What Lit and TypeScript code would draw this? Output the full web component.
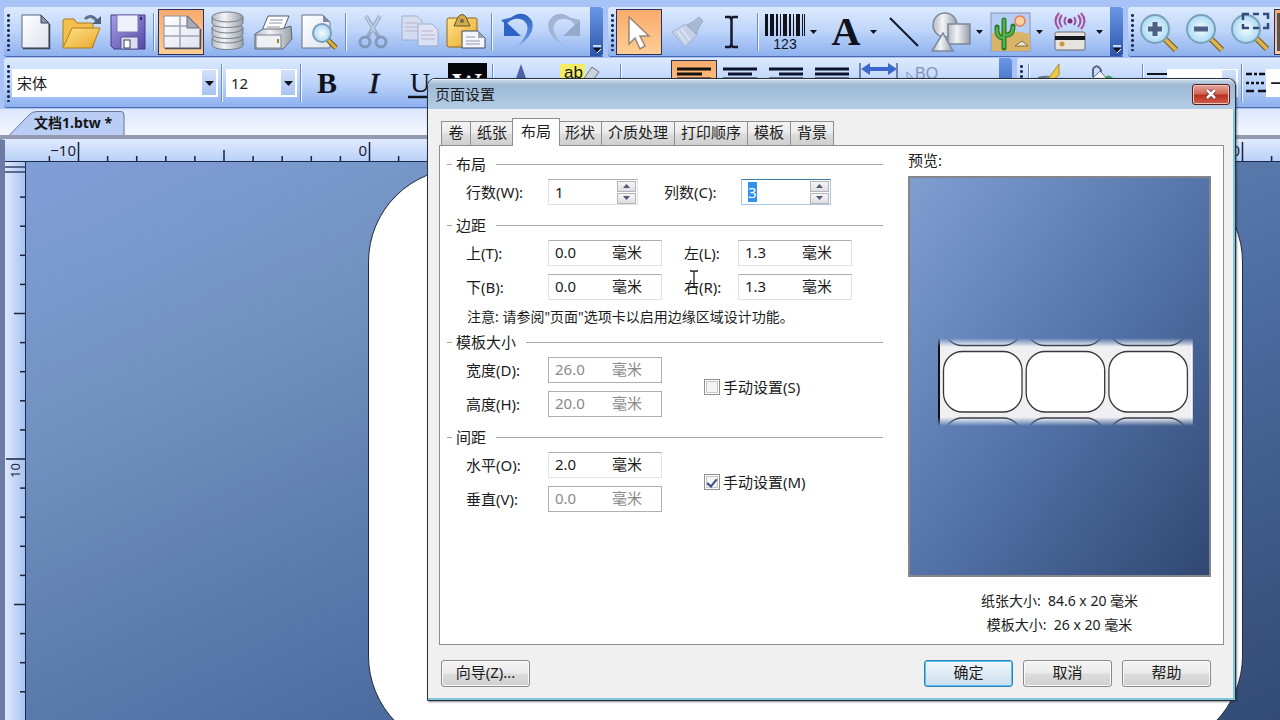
import { LitElement, html, svg, css, nothing } from "lit";
import { customElement, query } from "lit/decorators.js";
import { classMap } from "lit/directives/class-map.js";

const ICONS: Record<string, unknown> = {
  blank: svg`<path d="M10 6h19l8 8v25H10z" fill="url(#paper)" stroke="#5d6474"/><path d="M29 6v8h8z" fill="#8b95ad" stroke="#3d4456"/><path d="M11 39.500h26.500V15" fill="none" stroke="#3d4456" stroke-width="1.500"/>`,
  open: svg`<path d="M5 38V12q0-2 2-2h9l3 4h14q2 0 2 2v22z" fill="#f3c04b" stroke="#a97a1c"/><path d="M5 39l9-20h28l-8 20z" fill="url(#gold)" stroke="#b17c12"/><path d="M27 10q6-6 12 2" fill="none" stroke="#60718f" stroke-width="3"/><path d="M43 7v8h-9z" fill="#4f6080"/>`,
  save: svg`<path d="M7 6h34v34H10l-3-3z" fill="url(#violet)" stroke="#453a8c"/><rect x="13" y="6" width="21" height="17" rx="1" fill="#eef0fb" stroke="#7d78b8"/><path d="M17 28h17v12H17z" fill="#dcdff0" stroke="#5c54a0"/><rect x="20" y="31" width="6" height="8" fill="#fff" stroke="#3c3c58"/><rect x="36" y="8" width="2" height="3" fill="#2e2671"/>`,
  grid: svg`<path d="M6 7h24l12 12v20H6z" fill="url(#paper)" stroke="#8a8f9d"/><path d="M6 17h26M6 27h36M22 7v32" stroke="#a1a5b2" stroke-width="1.500"/><path d="M29 7v12h12z" fill="#a7adb8" stroke="#6b6f7c"/><path d="M7 39.500h35.500V20" fill="none" stroke="#4c4f5c" stroke-width="1.500"/>`,
  database: svg`<g fill="url(#steel)" stroke="#747b85"><path d="M8 30v6c0 6 31 6 31 0v-6z"/><ellipse cx="23.500" cy="29" rx="15.500" ry="5"/><path d="M8 19v6c0 6 31 6 31 0v-6z"/><ellipse cx="23.500" cy="19" rx="15.500" ry="5"/><path d="M8 8v6c0 6 31 6 31 0V8z"/><ellipse cx="23.500" cy="8" rx="15.500" ry="5"/></g>`,
  printer: svg`<path d="M18 7h21l-7 17H11z" fill="#fff" stroke="#555c6c"/><path d="M20 11h13M19 14h13M17 18h13" stroke="#8c93a4"/><path d="M5 25l8-5h18l10-3 1 13-9 10H5z" fill="url(#steel)" stroke="#5d6474"/><path d="M6 26h25v13H6z" fill="#eef0f4" stroke="#7b8292"/><rect x="27" y="30" width="2" height="4" fill="#8a8a24"/>`,
  preview: svg`<path d="M6 6h21l7 7v26H6z" fill="url(#paper)" stroke="#6a7184"/><path d="M27 6v7h7z" fill="#7d88a3"/><path d="M32 31l8 8" stroke="#6c5a18" stroke-width="5"/><path d="M32 31l8 8" stroke="#d9b23a" stroke-width="3"/><circle cx="26" cy="24" r="9" fill="url(#lens)" stroke="#7d9cba" stroke-width="2"/>`,
  cut: svg`<g opacity=".75"><path d="M16 7l13 22M30 7L17 29" stroke="#8d9cba" stroke-width="4"/><path d="M16 7l9 16M30 7l-9 16" stroke="#c6d2e8" stroke-width="1.500"/><circle cx="15" cy="33" r="5" fill="none" stroke="#7988a9" stroke-width="3"/><circle cx="31" cy="33" r="5" fill="none" stroke="#7988a9" stroke-width="3"/></g>`,
  copy: svg`<g opacity=".8"><path d="M6 7h15l5 5v19H6z" fill="#d9deee" stroke="#9aa5c4"/><path d="M9 14h13M9 18h13M9 22h13" stroke="#c6a9bd"/><path d="M22 15h14l6 6v16H22z" fill="#e4e8f4" stroke="#98a2bd"/><path d="M25 22h12M25 26h14M25 30h14" stroke="#c6a9bd"/></g>`,
  paste: svg`<rect x="5" y="9" width="30" height="29" rx="2" fill="url(#gold)" stroke="#8f6a12"/><path d="M12 17l4-9q4-5 8 0l4 9z" fill="#cfab4c" stroke="#6c5620"/><circle cx="20" cy="12" r="2" fill="#6f6a4a"/><path d="M20 22h16l7 7v10H20z" fill="#f3f5fa" stroke="#434a5e"/><path d="M24 28h9M24 32h14M24 35h14" stroke="#9199ac"/><path d="M36 22v7h7z" fill="#9aa3b6"/>`,
  undo: svg`<path d="M9 11l5 5q7-9 17-5 11 8-5 26 18-12 14-25-8-13-22-3l-1 0z" fill="url(#undoBlue)" transform="translate(-4 0)"/><path d="M8 11v16h17z" fill="#2c63c4"/>`,
  redo: svg`<path d="M9 11l5 5q7-9 17-5 11 8-5 26 18-12 14-25-8-13-22-3l-1 0z" fill="#a3b3d1" transform="translate(47 0) scale(-1 1)"/><path d="M38 11v16H21z" fill="#97a8ca"/>`,
  pointer: svg`<path d="M13 8v27l6-6 5 11 5-3-5-10h9z" fill="#fff" stroke="#97877a" stroke-width="1.500"/>`,
  brush: svg`<g opacity=".85"><path d="M10 23l13-8 13 10-13 13z" fill="#c5d0e4" stroke="#9dabc8"/><path d="M25 16l6-3 6-5 4 4-4 6-3 7z" fill="#a7b3cd" stroke="#8e9cba"/><path d="M15 22l9 12M19 19l9 12" stroke="#e2e8f3" stroke-width="2"/></g>`,
  ibeam: svg`<path d="M17 8h5l1 2 2-2h5M17 38h5l1-2 2 2h5M23.500 9v28" fill="none" stroke="#151a2b" stroke-width="2.500"/>`,
  barcode: svg`<path d="M3 5h3v22H3zM8 5h4v22H8zM14 5h2v22h-2zM18 5h1v22h-1zM21 5h4v22h-4zM27 5h2v22h-2zM31 5h1v22h-1zM34 5h4v22h-4zM40 5h1v22h-1zM42 5h1v22h-1z" fill="#10131c"/><text x="23" y="40" text-anchor="middle" class="sans" font-size="14">123</text>`,
  letter: svg`<text x="24" y="36" text-anchor="middle" class="serif" font-size="40">A</text>`,
  line: svg`<path d="M8 9l28 28" stroke="#10162a" stroke-width="2"/>`,
  shapes: svg`<g fill="url(#steel)" stroke="#7d879b" stroke-width="1.500"><circle cx="17" cy="16" r="12"/><path d="M20 15h22v20H20z"/><path d="M15 24l10 18H4z"/></g>`,
  picture: svg`<rect x="3" y="4" width="39" height="38" fill="#b6cdf6" stroke="#8694b4"/><path d="M4 24q18-4 38 1v17H4z" fill="#d8b468"/><circle cx="32" cy="12" r="5" fill="#ffd0a0" stroke="#e97b4e" stroke-width="1.500"/><path d="M16 39V11M16 29q-8 0-7-11M17 26q8 1 8-9" fill="none" stroke="#247a2b" stroke-width="5" stroke-linecap="round"/><path d="M16 38V11M16 29q-8 0-7-10M17 26q8 1 8-8" fill="none" stroke="#55b24b" stroke-width="2.500" stroke-linecap="round"/><path d="M27 37l7-5 6 5z" fill="#f2e8d6" stroke="#7a6a48"/>`,
  rfid: svg`<g fill="none" stroke="#a0509f" stroke-width="2"><path d="M18 8q-3 4 0 8M26 8q3 4 0 8M14 6q-5 6 0 12M30 6q5 6 0 12M11 4q-7 8 0 16M33 4q7 8 0 16"/></g><circle cx="22" cy="12" r="2.500" fill="#7c2d7c"/><rect x="7" y="23" width="30" height="18" rx="2" fill="#e6e3de" stroke="#6b6b70"/><path d="M7 27h30v4H7z" fill="#15171f"/><circle cx="14" cy="35" r="2.500" fill="#c8963c"/>`,
  zoomIn: svg`<path d="M28 29l12 12" stroke="#7f651c" stroke-width="6"/><path d="M28 29l12 12" stroke="#dcb552" stroke-width="3.500"/><circle cx="19" cy="20" r="14" fill="url(#lens)" stroke="#7ba0bd" stroke-width="2"/><path d="M19 13v14M12 20h14" stroke="#4e6184" stroke-width="5"/>`,
  zoomOut: svg`<path d="M28 29l12 12" stroke="#7f651c" stroke-width="6"/><path d="M28 29l12 12" stroke="#dcb552" stroke-width="3.500"/><circle cx="19" cy="20" r="14" fill="url(#lens)" stroke="#7ba0bd" stroke-width="2"/><path d="M12 20h14" stroke="#4e6184" stroke-width="5"/>`,
  zoomArea: svg`<path d="M28 29l11 11" stroke="#7f651c" stroke-width="6"/><path d="M28 29l11 11" stroke="#dcb552" stroke-width="3.500"/><circle cx="18" cy="20" r="14" fill="url(#lens)" stroke="#7ba0bd" stroke-width="2"/><path d="M15 11V5h6M25 5h6M35 5h5v5M40 14v5h-5M31 19h-6M21 19h-6v-4" fill="none" stroke="#34497a" stroke-width="2.500"/>`,
  page: svg`<rect x="3" y="4" width="36" height="38" fill="#53565f"/>`,
  bold: svg`<text x="22" y="33" text-anchor="middle" class="serif" font-size="30">B</text>`,
  italic: svg`<text x="23" y="33" text-anchor="middle" class="serif regular" font-size="30" font-style="italic" stroke="#10131c" stroke-width=".6">I</text>`,
  underline: svg`<text x="23" y="32" text-anchor="middle" class="serif regular" font-size="28">U</text><path d="M11 37h24" stroke="#10131c" stroke-width="2.500"/>`,
  inverse: svg`<path d="M5 3h39v38H5z" fill="#05060a"/><text x="24" y="33" text-anchor="middle" class="serif light" font-size="30">W</text>`,
  fontColor: svg`<path d="M17 24L24 4l7 20z" fill="#4a63a8"/>`,
  marker: svg`<path d="M3 4h25v14H3z" fill="#f4ec62"/><text x="7" y="18" class="sans" font-size="17">ab</text><path d="M26 20l9-13 7 5-9 12z" fill="#cbd1df" stroke="#68728a"/>`,
  left: svg`<path d="M6 9h34M6 14h25M6 19h34" stroke="#16130f" stroke-width="3"/>`,
  center: svg`<path d="M6 9h34M11 14h24M6 19h34" stroke="#0e1430" stroke-width="3"/>`,
  right: svg`<path d="M6 9h34M16 14h24M6 19h34" stroke="#0e1430" stroke-width="3"/>`,
  justify: svg`<path d="M6 9h34M6 14h34M6 19h34" stroke="#0e1430" stroke-width="3"/>`,
  fit: svg`<path d="M5 3v18M42 3v18" stroke="#566792" stroke-width="1.500"/><path d="M6 9l9-6v4h18V3l9 6-9 6v-4H15v4z" fill="#3b68cf"/>`,
  arc: svg`<text x="14" y="19" class="sans faint" font-size="16">BO</text><path d="M6 12l6 6H6z" fill="none" stroke="#8193be"/>`,
  pencil: svg`<path d="M5 18q8-2 12-1" fill="none" stroke="#68728a" stroke-width="2"/><path d="M15 19L26 4v11l-6 5z" fill="#edca45" stroke="#aa8a28"/>`,
  bucket: svg`<path d="M14 17V9q4-6 8 1v4" fill="none" stroke="#5b6785" stroke-width="2"/><path d="M12 20l9-9 8 9z" fill="#f1f3f8" stroke="#68728a"/><path d="M25 20q3-8 9-2v2z" fill="#3da553"/>`,
};

const DEFS = svg`<defs>
  <linearGradient id="paper" x1="0" y1="0" x2="1" y2="1"><stop offset="0" stop-color="#fff"/><stop offset="1" stop-color="#dfe3ef"/></linearGradient>
  <linearGradient id="gold" x1="0" y1="0" x2="1" y2="1"><stop offset="0" stop-color="#ffe48d"/><stop offset="1" stop-color="#e9a62a"/></linearGradient>
  <linearGradient id="violet" x1="0" y1="0" x2="1" y2="1"><stop offset="0" stop-color="#a49fe4"/><stop offset="1" stop-color="#5548a6"/></linearGradient>
  <linearGradient id="steel" x1="0" y1="0" x2="1" y2="0"><stop offset="0" stop-color="#b4bac2"/><stop offset=".4" stop-color="#f2f4f6"/><stop offset="1" stop-color="#989fa9"/></linearGradient>
  <radialGradient id="lens"><stop offset="0" stop-color="#f5fcff"/><stop offset="1" stop-color="#a9daf2"/></radialGradient>
  <linearGradient id="undoBlue" x1="0" y1="0" x2="0" y2="1"><stop offset="0" stop-color="#2b62c0"/><stop offset="1" stop-color="#6f9ce8"/></linearGradient>
</defs>`;

type Tool = { icon: string; title: string; on?: boolean; menu?: boolean };
const t = (icon: string, title: string, extra: Partial<Tool> = {}): Tool => ({ icon, title, ...extra });

@customElement("tool-button")
class ToolButton extends LitElement {
  static properties = { icon: {}, name: {}, on: { type: Boolean }, menu: { type: Boolean } };
  declare icon: string;
  declare name: string;
  declare on: boolean;
  declare menu: boolean;
  static styles = css`
    :host { display: block; flex: none; }
    .tool { display: flex; align-items: center; width: 46px; height: 46px; padding: 0; border: 0; background: none; overflow: hidden; }
    .tool.menu { width: 60px; }
    .tool.on { background: linear-gradient(#f8ab6c, #ffce94); box-shadow: inset 0 0 0 1px #2c2f62; }
    .glyph { flex: none; width: 46px; height: 46px; }
    .arrow { flex: none; width: 7px; height: 4px; margin-left: 2px; }
    .sans { font-family: "Liberation Sans", sans-serif; fill: #10131c; }
    .serif { font-family: "Liberation Serif", serif; font-weight: 700; fill: #10131c; }
    .regular { font-weight: 400; }
    .light { fill: #fff; }
    .faint { fill: #8193be; }
  `;
  render() {
    return html`<button class=${classMap({ tool: true, on: this.on, menu: this.menu })} aria-label=${this.name}>
      <svg class="glyph" viewBox="0 0 46 46">${DEFS}${ICONS[this.icon]}</svg>
      ${this.menu ? html`<svg class="arrow" viewBox="0 0 7 4"><path d="M0 0h7L3.500 4z" fill="#10131c"/></svg>` : nothing}
    </button>`;
  }
}

@customElement("page-setup")
class PageSetup extends LitElement {
  @query("#cols") cols!: HTMLInputElement;
  static styles = css`
    :host { display: block; box-sizing: border-box; color: #1c1c1c; font: 15px/20px "Noto Sans", "Noto Sans CJK SC", sans-serif;
      background: #f0f0f0; border: 1px solid #27303d; border-radius: 8px 8px 1px 1px; overflow: hidden;
      box-shadow: inset -2px -2px 0 #7fc8da, 1px 1px 2px #2238; padding: 0 11px 13px; }
    button, input { font: inherit; color: inherit; }
    .title { display: flex; align-items: center; justify-content: space-between; height: 30px; margin: 0 -11px; padding: 0 5px 0 7px;
      background: linear-gradient(#d3dfea, #9db9d5 20%, #b4cde6); box-shadow: inset 0 1px 0 #e9f1f8; }
    .title h1 { margin: 0; font-size: 15px; font-weight: 400; }
    .close { width: 38px; height: 21px; padding: 0; border: 1px solid #5b1f22; border-radius: 3px; background: linear-gradient(#e3a79c, #cf6555 48%, #b9301f 52%, #cf5f4c);
      box-shadow: inset 0 0 0 1px #f0c3bb; display: grid; place-items: center; }
    .close svg { width: 12px; height: 10px; }
    .tabs { display: flex; align-items: flex-end; height: 27px; padding: 9px 3px 0; }
    .tab { height: 24px; padding: 0 0 3px; margin: 0 0 0 -1px; flex: none; border: 1px solid #8c8e92; border-bottom: 0; background: linear-gradient(#f3f3f3, #ebebeb 48%, #dddddd 52%, #cfcfcf); }
    .t1 { width: 30px; } .t2 { width: 44px; } .t4 { width: 74px; }
    .tab.active { width: 48px; height: 28px; margin: 0 -1px -1px -2px; padding-bottom: 3px; background: #fff; position: relative; z-index: 1; }
    .panel { display: grid; grid-template-columns: minmax(0, 1fr) 303px; column-gap: 25px; background: #fff; border: 1px solid #8c8e92; min-height: 498px; padding: 0 12px 0 7px; }
    form { padding-top: 8px; min-width: 0; }
    fieldset { border: 0; margin: 0 0 10px; padding: 0; min-width: 0; }
    fieldset.tight { margin-bottom: 5px; }
    .head { display: flex; align-items: center; gap: 4px; height: 20px; margin-bottom: 5px; }
    .head::before, .head::after { content: ""; height: 1px; background: #a9a9a9; }
    .head::before { width: 5px; }
    .head::after { flex: 1; margin-left: 6px; }
    .rows { display: grid; grid-template-columns: 82px 114px auto 1fr; row-gap: 8px; align-items: center; padding-left: 19px; }
    .rows > label:not(.check) { grid-column: 1; }
    .rows > .field { grid-column: 2; }
    .side { grid-column: 3; display: grid; grid-template-columns: 54px 114px; align-items: center; margin-left: 22px; }
    .side.wide { grid-template-columns: 77px 90px; margin-left: 2px; }
    .field { display: flex; align-items: center; box-sizing: border-box; height: 26px; border: 1px solid #e0e3ea; border-top-color: #abadb3; background: #fff; padding: 0 0 2px 6px; }
    .field span { white-space: nowrap; }
    .field input { width: 57px; flex: none; padding: 0; border: 0; outline: 0; background: none; height: 20px; line-height: 20px; }
    .field.off { border: 1px solid #afafaf; color: #8a8a8a; }
    .field.spin { width: 90px; justify-content: space-between; padding: 0 1px 0 6px; }
    .field.focus { border-color: #a8c8e8; border-top-color: #3d7bad; }
    .arrows { display: grid; gap: 1px; }
    .arrows button { width: 19px; height: 11px; padding: 0; display: grid; place-items: center; border: 1px solid #b5b5b9; background: linear-gradient(#f6f6f6, #dedee2); }
    .arrows svg { width: 7px; height: 4px; }
    .field input::selection { background: #3390ee; color: #fff; }
    .note { margin: 7px 0 0 20px; font-size: 14px; white-space: nowrap; }
    .check { display: flex; align-items: center; gap: 3px; grid-row: 1 / span 2; grid-column: 3; margin-left: 42px; }
    .check input { appearance: none; box-sizing: border-box; width: 16px; height: 16px; margin: 0; border: 1px solid #8e8f8f; background: #f4f4f4; box-shadow: inset 0 0 0 1px #fff, inset 0 0 0 2px #c3c7ce; display: grid; place-items: center; }
    .check input:checked::after { content: ""; width: 4px; height: 8px; border: solid #3a4a86; border-width: 0 2px 2px 0; transform: rotate(40deg); }
    .preview { padding-top: 4px; min-width: 0; }
    .preview h2 { margin: 0 0 6px; font-size: 15px; font-weight: 400; }
    .preview svg { display: block; width: 100%; height: auto; }
    .facts { margin: 12px 0 0; font-size: 14px; line-height: 24px; text-align: center; white-space: pre-wrap; }
    .facts p { margin: 0; }
    .actions { display: flex; gap: 10px; margin-top: 15px; padding: 0 13px 0 2px; }
    .push { width: 89px; height: 27px; padding: 0 0 3px; border: 1px solid #8a8a8a; border-radius: 3px; background: linear-gradient(#f4f4f4, #ebebeb 48%, #dcdcdc 52%, #d0d0d0); box-shadow: inset 0 0 0 1px #fafafa; }
    .push.ok { margin-left: auto; border-color: #3c7fb1; background: linear-gradient(#f2f6fa, #dfebf5 50%, #c9def0); box-shadow: inset 0 0 0 1px #4cc8ee; }
  `;
  firstUpdated() {
    this.cols.focus({ preventScroll: true });
    this.cols.select();
  }
  measure(id: string, value: string, off = false) {
    return html`<div class=${classMap({ field: true, off })}><input id=${id} type="text" .value=${value} ?disabled=${off}><span>毫米</span></div>`;
  }
  spinner(id: string, value: string, focus = false) {
    return html`<div class=${classMap({ field: true, spin: true, focus })}><input id=${id} type="text" .value=${value}>
      <span class="arrows"><button type="button" aria-label="增加"><svg viewBox="0 0 7 4"><path d="M0 4h7L3.500 0z" fill="#55597a"/></svg></button>
      <button type="button" aria-label="减少"><svg viewBox="0 0 7 4"><path d="M0 0h7L3.500 4z" fill="#55597a"/></svg></button></span></div>`;
  }
  render() {
    const tabs: [string, string][] = [["卷", "t1"], ["纸张", "t2"], ["布局", "active"], ["形状", "t2"], ["介质处理", "t4"], ["打印顺序", "t4"], ["模板", "t2"], ["背景", "t2"]];
    return html`
      <header class="title"><h1>页面设置</h1>
        <button class="close" aria-label="关闭"><svg viewBox="0 0 12 10"><path d="M2 1l8 8M10 1L2 9" stroke="#6b2a28" stroke-width="4"/><path d="M2 1l8 8M10 1L2 9" stroke="#fff" stroke-width="2.500"/></svg></button>
      </header>
      <div class="tabs" role="tablist">${tabs.map(([n, c]) => html`<button class="tab ${c}" role="tab" aria-selected=${c === "active"}>${n}</button>`)}</div>
      <div class="panel">
        <form>
          <fieldset><div class="head">布局</div>
            <div class="rows"><label for="rows">行数(W):</label>${this.spinner("rows", "1")}
              <div class="side wide"><label for="cols">列数(C):</label>${this.spinner("cols", "3", true)}</div></div>
          </fieldset>
          <fieldset class="tight"><div class="head">边距</div>
            <div class="rows">
              <label for="top">上(T):</label>${this.measure("top", "0.0")}
              <div class="side"><label for="left">左(L):</label>${this.measure("left", "1.3")}</div>
              <label for="bottom">下(B):</label>${this.measure("bottom", "0.0")}
              <div class="side"><label for="right">右(R):</label>${this.measure("right", "1.3")}</div>
            </div>
            <p class="note">注意: 请参阅"页面"选项卡以启用边缘区域设计功能。</p>
          </fieldset>
          <fieldset><div class="head">模板大小</div>
            <div class="rows">
              <label for="w">宽度(D):</label>${this.measure("w", "26.0", true)}
              <label class="check"><input type="checkbox">手动设置(S)</label>
              <label for="h">高度(H):</label>${this.measure("h", "20.0", true)}
            </div>
          </fieldset>
          <fieldset><div class="head">间距</div>
            <div class="rows">
              <label for="hg">水平(O):</label>${this.measure("hg", "2.0")}
              <label class="check"><input type="checkbox" checked>手动设置(M)</label>
              <label for="vg">垂直(V):</label>${this.measure("vg", "0.0", true)}
            </div>
          </fieldset>
        </form>
        <section class="preview"><h2>预览:</h2>
          <svg viewBox="0 0 303 401">
            <defs>
              <linearGradient id="desk" x1="0" y1="0" x2="1" y2="1"><stop offset="0" stop-color="#809ed0"/><stop offset=".5" stop-color="#5474aa"/><stop offset="1" stop-color="#304772"/></linearGradient>
              <linearGradient id="fade" x1="0" y1="0" x2="0" y2="1"><stop offset="0" stop-color="#fff" stop-opacity="0"/><stop offset=".1" stop-color="#fff"/><stop offset=".9" stop-color="#fff"/><stop offset="1" stop-color="#fff" stop-opacity="0"/></linearGradient>
              <mask id="soft"><rect x="28" y="162" width="258" height="88" fill="url(#fade)"/></mask>
            </defs>
            <rect x="1" y="1" width="301" height="399" fill="url(#desk)" stroke="#85868c" stroke-width="2"/>
            <g mask="url(#soft)"><rect x="31" y="160" width="253" height="94" fill="#f0f0f2"/><path d="M31 160v94" stroke="#111" stroke-width="2"/><path d="M284 160v94" stroke="#fff" stroke-width="1.500"/>
              ${[0, 1, 2].map((c) => [0, 1, 2].map((r) => svg`<rect x=${35.5 + c * 82.7} y=${109 + r * 66.500} width="78.500" height="60.500" rx="19" fill="#fff" stroke="#38383c" stroke-width="1.300"/>`))}
            </g>
          </svg>
          <div class="facts"><p>纸张大小:  84.6 x 20 毫米</p><p>模板大小:  26 x 20 毫米</p></div>
        </section>
      </div>
      <footer class="actions"><button class="push">向导(Z)...</button><button class="push ok">确定</button><button class="push">取消</button><button class="push">帮助</button></footer>`;
  }
}

@customElement("app-root")
class AppRoot extends LitElement {
  static styles = css`
    :host { display: flex; flex-direction: column; position: relative; min-height: 100vh; overflow: hidden; box-sizing: border-box; padding-top: 7px; background: #aac3f6; font: 15px/20px "Noto Sans", "Noto Sans CJK SC", sans-serif; color: #1c1c1c; }
    .bar { display: flex; gap: 5px; height: 51px; padding-left: 4px; overflow: hidden; }
    .group { display: flex; align-items: center; flex: none; box-sizing: border-box; height: 50px; background: linear-gradient(#dceafd, #bdd4fa 50%, #8db0ee); border-bottom: 1px solid #4a69b0; border-radius: 3px 0 0 3px; }
    .group.fill { flex: 1; }
    .grip { flex: none; width: 3px; height: 38px; margin: 0 2px 0 3px; background: radial-gradient(circle, #1b2b52 1px, #0000 2px) 0 0 / 3px 5px; }
    .sep { flex: none; width: 1px; height: 38px; margin: 0 3px; background: #6a8ccb; border-right: 1px solid #f2f7ff; }
    .gap { flex: none; width: 46px; }
    .spare { flex: none; width: 50px; }
    .over { flex: none; width: 13px; height: 49px; margin-left: 2px; padding: 0 0 3px; border: 0; border-radius: 0 3px 3px 0; background: linear-gradient(#6a97e6, #2c55a8); display: flex; align-items: flex-end; justify-content: center; }
    .over svg { width: 8px; height: 8px; }
    .combo { display: grid; flex: none; height: 28px; background: #fff; }
    .combo > * { grid-area: 1 / 1; }
    .combo select { appearance: none; width: 100%; height: 28px; border: 0; padding: 0 0 0 5px; background: none; font: inherit; color: inherit; border-radius: 0; }
    .combo .drop { justify-self: end; align-self: center; width: 14px; height: 25px; background: linear-gradient(#d3e2fb, #a9c3f1); pointer-events: none; margin-right: 2px; }
    .font { width: 206px; } .size { width: 71px; } .weight { width: 71px; } .dash { width: 70px; }
    .mini { flex: none; width: 20px; height: 28px; }
    .docs { display: flex; align-items: flex-end; height: 26px; padding-left: 9px; background: linear-gradient(#dce6fc, #f4f7ff); border-bottom: 4px solid #9299b0; }
    .doc { display: grid; width: 116px; height: 24px; padding: 0; border: 0; background: none; color: #151515; font: 700 14px/24px "Noto Sans", "Noto Sans CJK SC", sans-serif; text-align: left; }
    .doc > * { grid-area: 1 / 1; }
    .doc svg { width: 116px; height: 24px; }
    .doc span { padding-left: 25px; }
    .work { display: grid; grid-template: 22px 1fr / 21px 1fr; flex: 1; border-left: 5px solid #6b7ba4; border-top: 1px solid #dce8fc; }
    .h { grid-column: 1 / 3; width: 100%; height: 22px; background: linear-gradient(#dfe9fd, #b9d1f8); border-bottom: 1px solid #1d2a4c; box-sizing: border-box; }
    .v { width: 21px; height: 100%; background: linear-gradient(90deg, #dfe9fd, #a9c4f1); border-right: 1px solid #1d2a4c; box-sizing: border-box; }
    .ruler { overflow: hidden; min-height: 0; }
    .ruler text { font: 15px "Noto Sans", sans-serif; fill: #1b2238; }
    .ruler.v text { font-size: 13px; }
    .canvas { position: relative; overflow: hidden; background: linear-gradient(155deg, #819fd7, #7191c0 25%, #4d6ca0 62%, #324a75); }
    .label { position: absolute; left: 342px; top: 6px; width: 875px; height: 582px; box-sizing: border-box; background: #fff; border: 1px solid #222a3c; border-radius: 94px; }
    .dialog { position: absolute; left: 427px; top: 78px; width: 809px; }
    .cursor { position: absolute; left: 689px; top: 270px; width: 10px; height: 18px; }
  `;
  tools(list: Tool[]) {
    return list.map((x) => html`<tool-button .icon=${x.icon} .name=${x.title} .on=${!!x.on} .menu=${!!x.menu}></tool-button>`);
  }
  combo(cls: string, name: string, value: string) {
    return html`<div class="combo ${cls}"><select aria-label=${name}><option>${value}</option></select>
      <svg class="drop" viewBox="0 0 14 25"><path d="M3 11h9l-4.500 5z" fill="#10131c"/></svg></div>`;
  }
  render() {
    const sep = html`<span class="sep"></span>`;
    const over = html`<button class="over" aria-label="更多"><svg viewBox="0 0 8 8"><path d="M0 1h8" stroke="#fff" stroke-width="1.500"/><path d="M0 3h8L4 7z" fill="#10131c"/><path d="M4 8l4-4" stroke="#fff"/></svg></button>`;
    const grip = html`<span class="grip"></span>`;
    const ticks = Array.from({ length: 90 }, (_, i) => i - 1);
    return html`
      <nav class="bar">
        <div class="group">${grip}${this.tools([t("blank", "新建"), t("open", "打开"), t("save", "保存")])}${sep}
          ${this.tools([t("grid", "页面设置", { on: true }), t("database", "数据库"), t("printer", "打印"), t("preview", "打印预览")])}${sep}
          ${this.tools([t("cut", "剪切"), t("copy", "复制"), t("paste", "粘贴")])}${sep}${this.tools([t("undo", "撤消"), t("redo", "恢复")])}${over}</div>
        <div class="group">${grip}${this.tools([t("pointer", "选择", { on: true }), t("brush", "格式刷"), t("ibeam", "文本光标")])}${sep}
          ${this.tools([t("barcode", "条形码", { menu: true }), t("letter", "文本", { menu: true }), t("line", "线条"), t("shapes", "形状", { menu: true }), t("picture", "图片", { menu: true }), t("rfid", "编码器", { menu: true })])}${over}</div>
        <div class="group fill">${grip}${this.tools([t("zoomIn", "放大"), t("zoomOut", "缩小"), t("zoomArea", "缩放选区"), t("page", "整页", { on: true })])}</div>
      </nav>
      <nav class="bar">
        <div class="group">${grip}${this.combo("font", "字体", "宋体")}${sep}${this.combo("size", "字号", "12")}${sep}
          ${this.tools([t("bold", "粗体"), t("italic", "斜体"), t("underline", "下划线"), t("inverse", "反白")])}${sep}
          ${this.tools([t("fontColor", "字体颜色", { menu: true }), t("marker", "突出显示", { menu: true })])}${sep}<span class="gap"></span>
          ${this.tools([t("left", "左对齐", { on: true }), t("center", "居中"), t("right", "右对齐"), t("justify", "两端对齐"), t("fit", "适合宽度"), t("arc", "弧形文本")])}<span class="spare"></span>${over}</div>
        <div class="group fill">${grip}<span class="sep"></span>${this.tools([t("pencil", "线条颜色"), t("bucket", "填充颜色", { menu: true })])}${sep}
          <svg class="mini" viewBox="0 0 20 28"><path d="M0 5h20" stroke="#10131c" stroke-width="2"/></svg>${this.combo("weight", "线宽", "1.0")}${sep}
          <svg class="mini" viewBox="0 0 20 28"><path d="M0 5h6m2 0h3m2 0h6M0 22h8m4 0h8" stroke="#10131c" stroke-width="2.500"/><path d="M0 14h20" stroke="#10131c" stroke-width="2.500" stroke-dasharray="3 2"/></svg>${this.combo("dash", "线型", "━")}</div>
      </nav>
      <div class="docs"><button class="doc"><svg viewBox="0 0 116 24"><path d="M.500 24L20 4Q23 .500 28 .500h84q3 0 3 4V24" fill="#b9cdf5" stroke="#67749a"/></svg><span>文档1.btw *</span></button></div>
      <main class="work">
        <svg class="ruler h">${ticks.map((i) => {
          const x = 73.5 + 29.1 * i;
          return svg`<path d="M${x} ${i % 10 === 0 ? 2 : i % 5 === 0 ? 10 : 16}V22" stroke="#1b2238" stroke-width="1.500"/>`;
        })}${[0, 1, 2, 3, 4].map((i) => svg`<text x=${71 + 291 * i} y="16" text-anchor="end">${i === 0 ? "−10" : (i - 1) * 10}</text>`)}</svg>
        <svg class="ruler v"><path d="M0 5h21M0 10h21" stroke="#34456b" stroke-width="1.500"/>${ticks.slice(2).map((i) => {
          const y = 6 + 29.1 * i;
          return svg`<path d="M${i % 10 === 0 ? 1 : i % 5 === 0 ? 9 : 15} ${y}H21" stroke="#1b2238" stroke-width="1.500"/>`;
        })}<text transform="translate(15 316) rotate(-90)">10</text></svg>
        <div class="canvas"><div class="label"></div></div>
      </main>
      <page-setup class="dialog" role="dialog" aria-label="页面设置"></page-setup>
      <svg class="cursor" viewBox="0 0 10 18"><path d="M1 1h3l1 1 1-1h3M5 2v14M1 17h3l1-1 1 1h3" fill="none" stroke="#222" stroke-width="1.300"/></svg>`;
  }
}
